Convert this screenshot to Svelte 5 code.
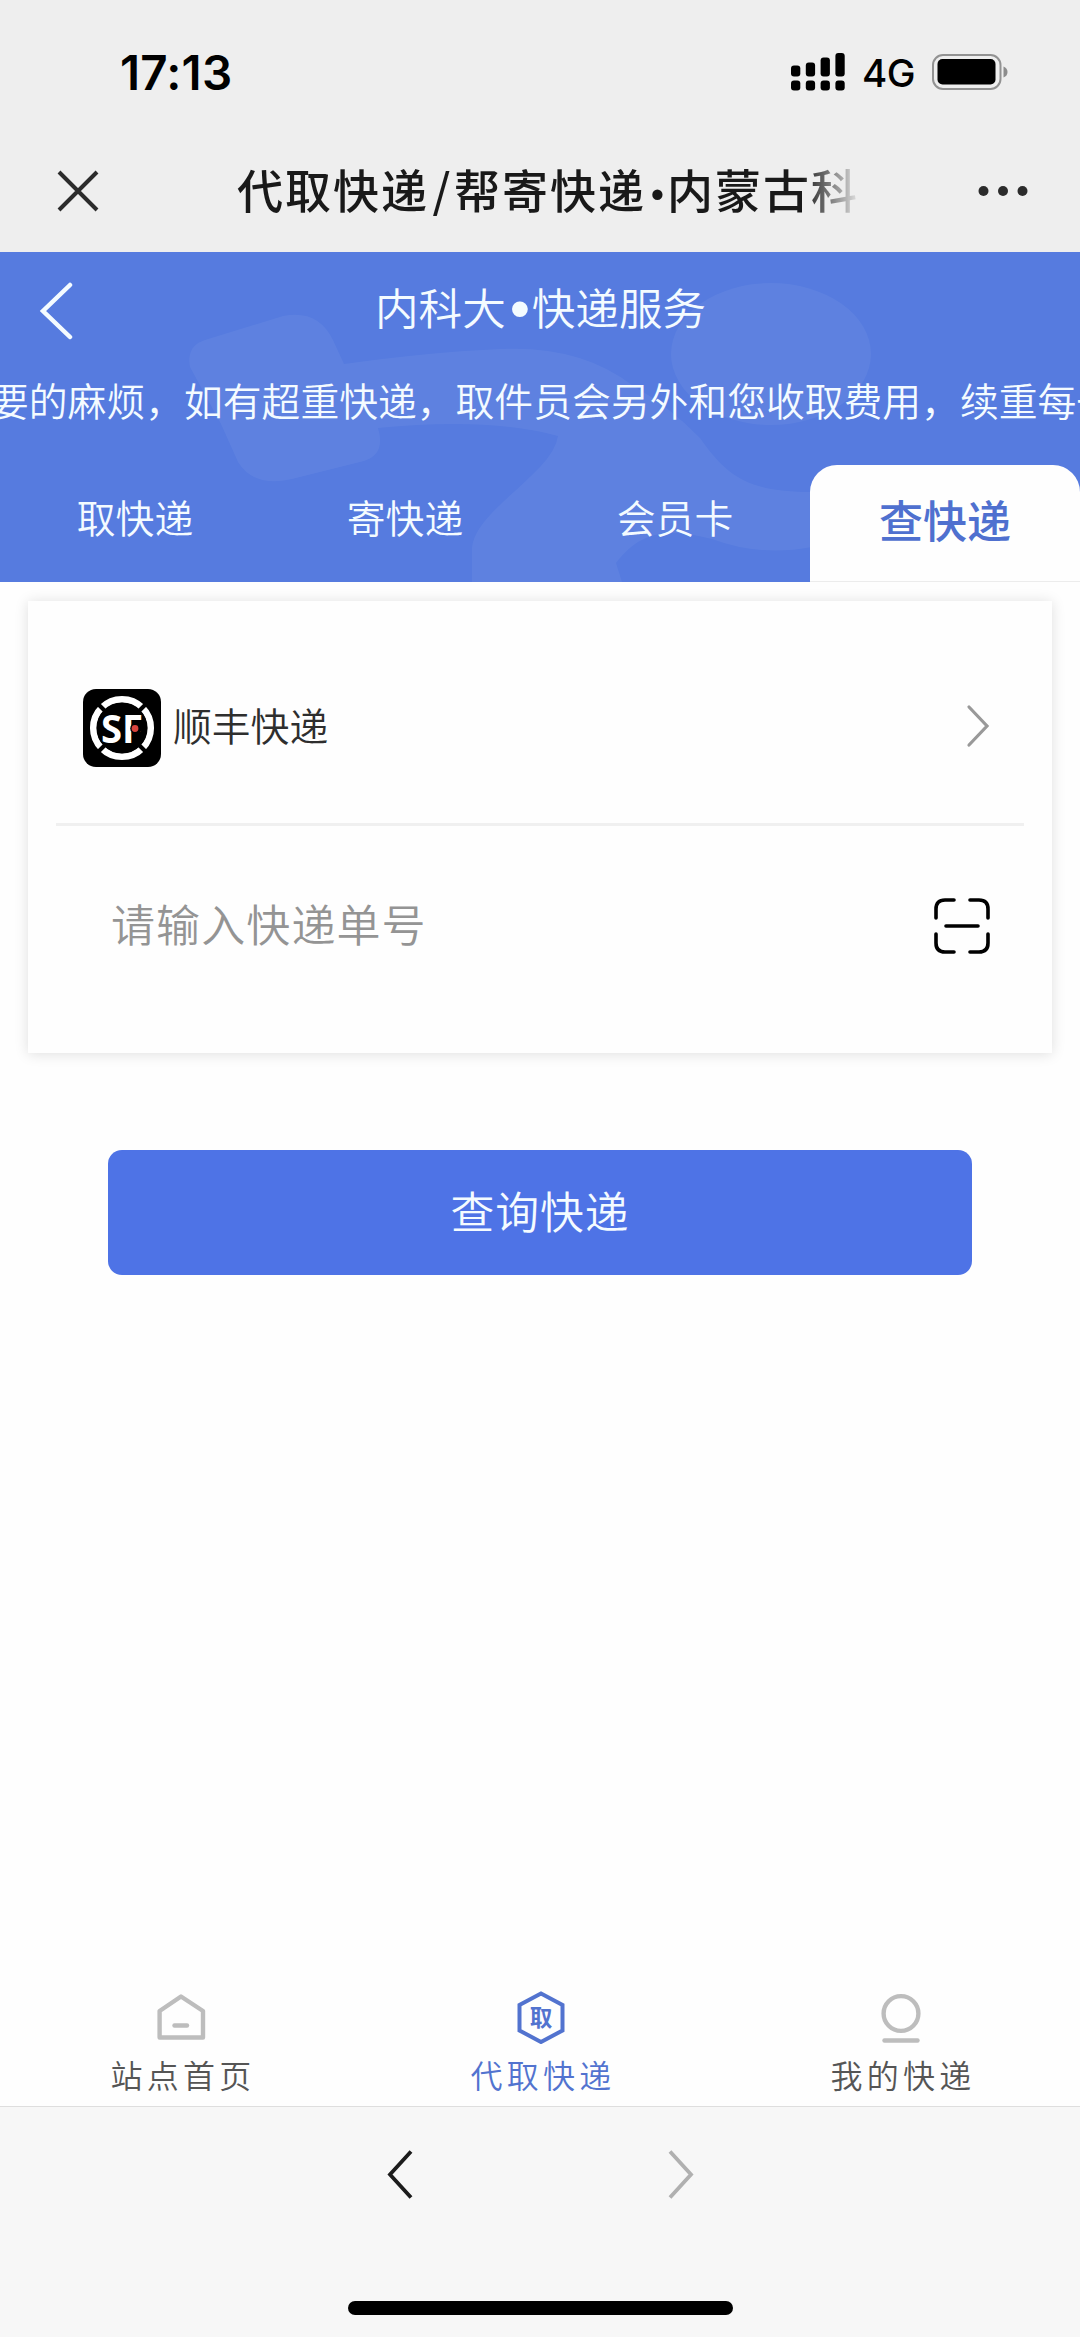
<script>
  const tabs = ['取快递', '寄快递', '会员卡', '查快递'];
  const active = 3;
  const notice = '要的麻烦，如有超重快递，取件员会另外和您收取费用，续重每一';
  // Cellular signal columns: left edge and top of the upper bar
  const bars = [
    { x: 0, y: 12.5 },
    { x: 14.8, y: 9.5 },
    { x: 29.6, y: 4.5 },
    { x: 44.4, y: 0 }
  ];
</script>

<div class="screen">
  <div class="status">
    <span class="time">17:13</span>
    <div class="indicators">
      <svg class="signal" width="54" height="38" viewBox="0 0 54 38">
        {#each bars as b}
          <rect x={b.x} y={b.y} width="9.3" height={23.5 - b.y} rx="3" />
          <rect x={b.x} y="27.5" width="9.3" height="10" rx="3" />
        {/each}
      </svg>
      <span class="network">4G</span>
      <svg class="battery" width="76" height="36" viewBox="0 0 76 36">
        <rect x="1" y="1" width="67.5" height="34" rx="10" fill="none" stroke="#929292" stroke-width="2" />
        <rect x="5.5" y="5" width="58" height="25.5" rx="5" />
        <path d="M71.5 12.5Q75.5 14 75.5 18T71.5 23.5Z" fill="#8c8c8c" />
      </svg>
    </div>
  </div>

  <div class="titlebar">
    <svg class="close" width="42" height="42" viewBox="0 0 42 42">
      <path d="M2 2L40 40M40 2L2 40" stroke="#2b2b2b" stroke-width="4" />
    </svg>
    <h1>代取快递<i>/</i>帮寄快递<b>•</b>内蒙古科</h1>
    <svg class="more" width="50" height="12" viewBox="0 0 50 12">
      <circle cx="5.5" cy="6" r="5" /><circle cx="25" cy="6" r="5" /><circle cx="44.5" cy="6" r="5" />
    </svg>
  </div>

  <header>
    <svg class="pattern" width="1080" height="330" viewBox="0 0 1080 330">
      <path d="M205 88L283 64Q318 57 333 88L344 112Q430 100 500 97Q580 93 632 133Q670 155 700 186C728 226 750 240 812 240V295Q760 305 712 287C665 275 640 280 616 311L622 330H472V296C474 270 510 246 540 215Q556 198 558 184Q490 165 378 176Q386 202 364 209L292 227Q254 236 238 210L221 172L190 115Q186 94 205 88Z" />
      <ellipse cx="771" cy="102" rx="100" ry="71" />
    </svg>
    <div class="heading">
      <svg class="back" width="34" height="58" viewBox="0 0 34 58">
        <path d="M31 3L4 29L31 55" />
      </svg>
      <h2>内科大<b>•</b>快递服务</h2>
    </div>
    <div class="notice">{notice}</div>
    <nav class="tabs">
      {#each tabs as t, i}
        <div class="tab" class:active={i === active}>{t}</div>
      {/each}
    </nav>
  </header>

  <main>
    <section class="card">
      <div class="company">
        <svg class="logo" width="78" height="78" viewBox="0 0 78 78">
          <rect width="78" height="78" rx="13" fill="#000" />
          <circle cx="39" cy="39" r="28.8" fill="none" stroke="#fff" stroke-width="6.5" />
          <path d="M14 14L64 64M64 14L14 64" stroke="#000" stroke-width="4" />
          <circle cx="39" cy="39" r="25.2" fill="#000" />
          <text x="18" y="53.5" font-size="40" textLength="42" lengthAdjust="spacingAndGlyphs">SF</text>
          <circle cx="53" cy="39.5" r="5.8" fill="#000" />
          <circle cx="52" cy="39.5" r="3.4" fill="#d9443c" />
        </svg>
        <span>顺丰快递</span>
        <svg class="go" width="24" height="44" viewBox="0 0 24 44">
          <path d="M3 3L21 22L3 41" />
        </svg>
      </div>
      <div class="number">
        <span>请输入快递单号</span>
        <svg class="scan" width="58" height="58" viewBox="0 0 58 58">
          <path d="M21 3H12Q3 3 3 12V21M37 3H46Q55 3 55 12V21M3 37V46Q3 55 12 55H21M55 37V46Q55 55 46 55H37M13 29H45" />
        </svg>
      </div>
    </section>
    <button>查询快递</button>
  </main>

  <nav class="bottom">
    <div class="item">
      <svg width="54" height="54" viewBox="0 0 54 54" fill="none" stroke="#bdbdbd" stroke-width="4.4" stroke-linejoin="round">
        <path d="M5.6 21L27 6.5L49 21V47.5H5.6Z" />
        <path d="M20.5 35.5H33" stroke-linecap="round" />
      </svg>
      <span>站点首页</span>
    </div>
    <div class="item on">
      <svg width="54" height="54" viewBox="0 0 54 54">
        <path d="M27 3.5L48.5 15V40.5L27 52L5.5 40.5V15Z" fill="none" stroke="#5273cf" stroke-width="4" />
        <text x="27" y="35.5" text-anchor="middle" font-size="22.5">取</text>
      </svg>
      <span>代取快递</span>
    </div>
    <div class="item">
      <svg width="54" height="54" viewBox="0 0 54 54" fill="none" stroke="#bdbdbd" stroke-width="4.4">
        <circle cx="27" cy="23.5" r="17.4" />
        <path d="M10.5 50.5H43.5" stroke-linecap="round" />
      </svg>
      <span>我的快递</span>
    </div>
  </nav>

  <footer>
    <div class="history">
      <svg width="28" height="50" viewBox="0 0 28 50"><path d="M25 2.5L4 25.5L25 48.5" stroke="#1c1c1c" /></svg>
      <svg width="28" height="50" viewBox="0 0 28 50"><path d="M3 2.5L24 25.5L3 48.5" stroke="#b0b0b0" /></svg>
    </div>
    <div class="home"></div>
  </footer>
</div>

<style>
  :global(body) { margin: 0; background: #fefefe; }
  .screen {
    width: 1080px;
    height: 2337px;
    display: flex;
    flex-direction: column;
    overflow: hidden;
    background: #fefefe;
    font-family: 'Noto Sans CJK SC', sans-serif;
    font-weight: 350;
  }
  svg { display: block; flex: none; }
  h1, h2 { margin: 0; white-space: nowrap; }
  i, b { font-style: normal; font-weight: inherit; }

  .status {
    height: 144px;
    box-sizing: border-box;
    padding: 0 72px 0 120px;
    display: flex;
    align-items: center;
    justify-content: space-between;
    background: #eee;
    font-family: Inter, sans-serif;
    color: #000;
  }
  .time { font-size: 47.5px; font-weight: 600; letter-spacing: 0.2px; }
  .indicators { display: flex; align-items: center; }
  .network { width: 52px; margin: 2px 18px 0 17px; font-size: 38.5px; font-weight: 500; letter-spacing: -0.5px; }

  .titlebar {
    height: 108px;
    box-sizing: border-box;
    padding: 0 52px 15px 57px;
    display: flex;
    align-items: center;
    background: #eee;
  }
  h1 {
    width: 625px;
    margin: 0 auto 0 138px;
    padding-bottom: 6px;
    font-size: 46px;
    line-height: 64px;
    font-weight: 500;
    letter-spacing: 2px;
    color: #191919;
    mask-image: linear-gradient(90deg, #000 565px, transparent 625px);
  }
  h1 i, h1 b, h2 b { display: inline-block; text-align: center; letter-spacing: 0; }
  h1 i { width: 25px; }
  h1 b { width: 21px; font: 500 38px 'Liberation Sans', sans-serif; line-height: 30px; text-indent: 2px; }
  .more { fill: #2b2b2b; }

  header {
    position: relative;
    height: 330px;
    display: flex;
    flex-direction: column;
    background: #567bdf;
    color: #f4fbff;
  }
  .pattern { position: absolute; top: 0; left: 0; fill: #fff; fill-opacity: 0.05; }
  .heading, .notice, .tabs { position: relative; }
  .heading { height: 117px; display: flex; align-items: center; padding-left: 39px; }
  .back path { fill: none; stroke: #f4fbff; stroke-width: 4.5; stroke-linecap: round; }
  h2 { margin-left: 302px; padding-bottom: 9px; font-size: 43.6px; line-height: 60px; font-weight: 350; }
  h2 b { width: 26px; font: 400 58px 'Liberation Sans', sans-serif; line-height: 30px; text-indent: 2px; vertical-align: -3px; }
  .notice {
    height: 96px;
    line-height: 61px;
    overflow: hidden;
    white-space: nowrap;
    text-indent: -10px;
    font-size: 38.8px;
  }
  .tabs { display: flex; flex: 1; }
  .tab { flex: 1; text-align: center; font-size: 38.8px; line-height: 102px; }
  .tab.active {
    background: #fefefe;
    border-radius: 27px 27px 0 0;
    border-bottom: 1px solid #ececec;
    box-sizing: border-box;
    color: #4f70cf;
    font-size: 44px;
    font-weight: 500;
    line-height: 109px;
  }

  main { flex: 1; display: flex; flex-direction: column; }
  .card {
    margin: 19px 28px 0;
    height: 452px;
    padding: 0 28px;
    box-sizing: border-box;
    background: #fefefe;
    box-shadow: 0 1px 13px rgba(0, 0, 0, 0.13);
  }
  .company {
    height: 225px;
    box-sizing: border-box;
    padding: 31px 34px 0 27px;
    display: flex;
    align-items: center;
    border-bottom: 3px solid #f0f0f0;
    font-size: 38.8px;
    color: #2e2e2e;
  }
  .company span { flex: 1; padding: 0 0 8px 12px; line-height: 56px; }
  .go { margin-bottom: 4px; }
  .logo text { fill: #fff; font-family: 'Open Sans', sans-serif; font-weight: 700; }
  .go path { fill: none; stroke: #999; stroke-width: 3.2; stroke-linecap: round; }
  .number {
    height: 200px;
    padding: 0 33px 0 55px;
    display: flex;
    align-items: center;
    justify-content: space-between;
    font-size: 44px;
    letter-spacing: 1.1px;
    color: #949494;
  }
  .number span { padding-bottom: 6px; }
  .scan path { fill: none; stroke: #000; stroke-width: 3.6; stroke-linecap: round; }

  button {
    width: 864px;
    height: 125px;
    margin: 97px auto 0;
    padding: 0 0 5px;
    border: 0;
    border-radius: 14px;
    background: #4e73e6;
    color: #f4fbff;
    font: 350 43.8px 'Noto Sans CJK SC', sans-serif;
    letter-spacing: 1px;
  }

  .bottom { height: 116px; display: flex; }
  .item {
    flex: 1;
    display: flex;
    flex-direction: column;
    align-items: center;
    padding-left: 2px;
    color: #555;
    font-size: 32px;
    letter-spacing: 4.2px;
    line-height: 38px;
  }
  .item span { margin-top: 11px; padding-left: 4px; }
  .item.on { color: #5273cf; }
  .item text { fill: #5273cf; font-weight: 700; letter-spacing: 0; }

  footer {
    height: 231px;
    box-sizing: border-box;
    border-top: 1px solid #dedede;
    background: #f7f7f7;
    display: flex;
    flex-direction: column;
    align-items: center;
  }
  .history { margin-top: 42px; display: flex; gap: 253px; }
  .history path { fill: none; stroke-width: 3.8; }
  .home { width: 385px; height: 14px; margin-top: 102px; border-radius: 7px; background: #000; }
</style>
